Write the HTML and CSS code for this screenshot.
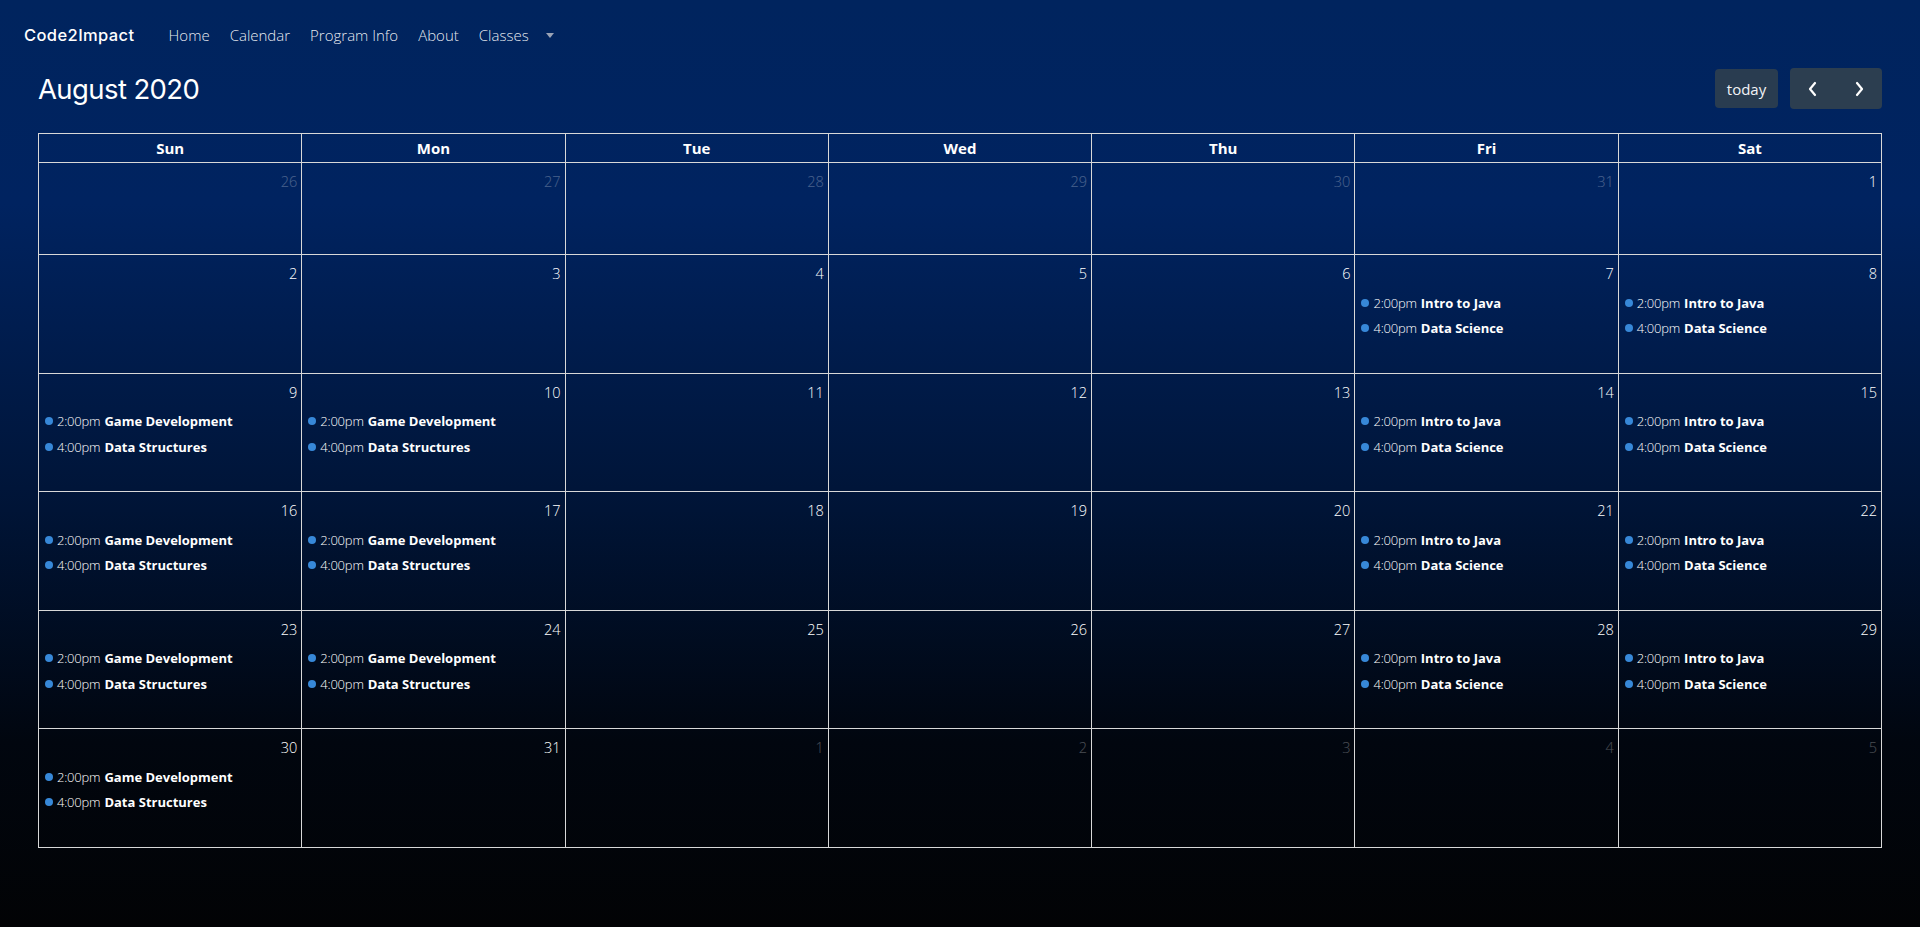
FILE: index.html
```html
<!DOCTYPE html>
<html lang="en">
<head>
    <meta charset="UTF-8">
    <meta name="viewport" content="width=device-width, initial-scale=1.0">
    <title>Calendar - Code2Impact</title>
    <link rel="stylesheet" href="styles.css">
</head>
<body>
    <nav class="navbar">
        <a class="brand" href="#">Code2Impact</a>
        <ul class="nav-links">
            <li><a href="#">Home</a></li>
            <li><a href="#">Calendar</a></li>
            <li><a href="#">Program Info</a></li>
            <li><a href="#">About</a></li>
            <li><a href="#" class="dropdown">Classes <span class="caret"></span></a></li>
        </ul>
    </nav>

    <main class="calendar">
        <div class="toolbar">
            <h2 class="title">August 2020</h2>
            <div class="controls">
                <button class="btn today-btn">today</button>
                <div class="btn-group">
                    <button class="btn icon-btn" aria-label="prev">
                        <svg width="12" height="16" viewBox="0 0 12 16"><polyline points="8,2 3,8 8,14" fill="none" stroke="#fff" stroke-width="2.2" stroke-linecap="round" stroke-linejoin="round"/></svg>
                    </button>
                    <button class="btn icon-btn" aria-label="next">
                        <svg width="12" height="16" viewBox="0 0 12 16"><polyline points="4,2 9,8 4,14" fill="none" stroke="#fff" stroke-width="2.2" stroke-linecap="round" stroke-linejoin="round"/></svg>
                    </button>
                </div>
            </div>
        </div>

        <table class="month">
            <thead>
                <tr>
                    <th>Sun</th><th>Mon</th><th>Tue</th><th>Wed</th><th>Thu</th><th>Fri</th><th>Sat</th>
                </tr>
            </thead>
            <tbody>
                <tr class="week short">
                    <td class="other"><div class="day-num">26</div></td>
                    <td class="other"><div class="day-num">27</div></td>
                    <td class="other"><div class="day-num">28</div></td>
                    <td class="other"><div class="day-num">29</div></td>
                    <td class="other"><div class="day-num">30</div></td>
                    <td class="other"><div class="day-num">31</div></td>
                    <td><div class="day-num">1</div></td>
                </tr>
                <tr class="week">
                    <td><div class="day-num">2</div></td>
                    <td><div class="day-num">3</div></td>
                    <td><div class="day-num">4</div></td>
                    <td><div class="day-num">5</div></td>
                    <td><div class="day-num">6</div></td>
                    <td>
                        <div class="day-num">7</div>
                        <div class="event"><span class="dot"></span><span class="time">2:00pm</span><b>Intro to Java</b></div>
                        <div class="event"><span class="dot"></span><span class="time">4:00pm</span><b>Data Science</b></div>
                    </td>
                    <td>
                        <div class="day-num">8</div>
                        <div class="event"><span class="dot"></span><span class="time">2:00pm</span><b>Intro to Java</b></div>
                        <div class="event"><span class="dot"></span><span class="time">4:00pm</span><b>Data Science</b></div>
                    </td>
                </tr>
                <tr class="week">
                    <td>
                        <div class="day-num">9</div>
                        <div class="event"><span class="dot"></span><span class="time">2:00pm</span><b>Game Development</b></div>
                        <div class="event"><span class="dot"></span><span class="time">4:00pm</span><b>Data Structures</b></div>
                    </td>
                    <td>
                        <div class="day-num">10</div>
                        <div class="event"><span class="dot"></span><span class="time">2:00pm</span><b>Game Development</b></div>
                        <div class="event"><span class="dot"></span><span class="time">4:00pm</span><b>Data Structures</b></div>
                    </td>
                    <td><div class="day-num">11</div></td>
                    <td><div class="day-num">12</div></td>
                    <td><div class="day-num">13</div></td>
                    <td>
                        <div class="day-num">14</div>
                        <div class="event"><span class="dot"></span><span class="time">2:00pm</span><b>Intro to Java</b></div>
                        <div class="event"><span class="dot"></span><span class="time">4:00pm</span><b>Data Science</b></div>
                    </td>
                    <td>
                        <div class="day-num">15</div>
                        <div class="event"><span class="dot"></span><span class="time">2:00pm</span><b>Intro to Java</b></div>
                        <div class="event"><span class="dot"></span><span class="time">4:00pm</span><b>Data Science</b></div>
                    </td>
                </tr>
                <tr class="week">
                    <td>
                        <div class="day-num">16</div>
                        <div class="event"><span class="dot"></span><span class="time">2:00pm</span><b>Game Development</b></div>
                        <div class="event"><span class="dot"></span><span class="time">4:00pm</span><b>Data Structures</b></div>
                    </td>
                    <td>
                        <div class="day-num">17</div>
                        <div class="event"><span class="dot"></span><span class="time">2:00pm</span><b>Game Development</b></div>
                        <div class="event"><span class="dot"></span><span class="time">4:00pm</span><b>Data Structures</b></div>
                    </td>
                    <td><div class="day-num">18</div></td>
                    <td><div class="day-num">19</div></td>
                    <td><div class="day-num">20</div></td>
                    <td>
                        <div class="day-num">21</div>
                        <div class="event"><span class="dot"></span><span class="time">2:00pm</span><b>Intro to Java</b></div>
                        <div class="event"><span class="dot"></span><span class="time">4:00pm</span><b>Data Science</b></div>
                    </td>
                    <td>
                        <div class="day-num">22</div>
                        <div class="event"><span class="dot"></span><span class="time">2:00pm</span><b>Intro to Java</b></div>
                        <div class="event"><span class="dot"></span><span class="time">4:00pm</span><b>Data Science</b></div>
                    </td>
                </tr>
                <tr class="week">
                    <td>
                        <div class="day-num">23</div>
                        <div class="event"><span class="dot"></span><span class="time">2:00pm</span><b>Game Development</b></div>
                        <div class="event"><span class="dot"></span><span class="time">4:00pm</span><b>Data Structures</b></div>
                    </td>
                    <td>
                        <div class="day-num">24</div>
                        <div class="event"><span class="dot"></span><span class="time">2:00pm</span><b>Game Development</b></div>
                        <div class="event"><span class="dot"></span><span class="time">4:00pm</span><b>Data Structures</b></div>
                    </td>
                    <td><div class="day-num">25</div></td>
                    <td><div class="day-num">26</div></td>
                    <td><div class="day-num">27</div></td>
                    <td>
                        <div class="day-num">28</div>
                        <div class="event"><span class="dot"></span><span class="time">2:00pm</span><b>Intro to Java</b></div>
                        <div class="event"><span class="dot"></span><span class="time">4:00pm</span><b>Data Science</b></div>
                    </td>
                    <td>
                        <div class="day-num">29</div>
                        <div class="event"><span class="dot"></span><span class="time">2:00pm</span><b>Intro to Java</b></div>
                        <div class="event"><span class="dot"></span><span class="time">4:00pm</span><b>Data Science</b></div>
                    </td>
                </tr>
                <tr class="week">
                    <td>
                        <div class="day-num">30</div>
                        <div class="event"><span class="dot"></span><span class="time">2:00pm</span><b>Game Development</b></div>
                        <div class="event"><span class="dot"></span><span class="time">4:00pm</span><b>Data Structures</b></div>
                    </td>
                    <td><div class="day-num">31</div></td>
                    <td class="other"><div class="day-num">1</div></td>
                    <td class="other"><div class="day-num">2</div></td>
                    <td class="other"><div class="day-num">3</div></td>
                    <td class="other"><div class="day-num">4</div></td>
                    <td class="other"><div class="day-num">5</div></td>
                </tr>
            </tbody>
        </table>
    </main>
</body>
</html>
```
FILE: styles.css
```css
:root {
    --line-color: #d8d8d8;
    --btn-color: #2c3e50;
    --event-dot: #3788d8;
    --text-color: #ffffff;
}

* {
    box-sizing: border-box;
}

body {
    margin: 0;
    min-height: 100vh;
    font-family: "Open Sans", "Noto Sans", sans-serif;
    color: var(--text-color);
    background: linear-gradient(180deg, #00245e 0%, #002360 22%, #001436 55%, #01060f 80%, #020305 100%);
    background-attachment: fixed;
}

/* navbar */
.navbar {
    display: flex;
    align-items: center;
    height: 70px;
    padding: 0 24px 0 24px;
}

.brand {
    font-family: "Inter", "Lato", sans-serif;
    font-weight: 500;
    font-size: 16.5px;
    color: #fff;
    text-decoration: none;
    letter-spacing: 0.4px;
    margin-right: 34px;
}

.nav-links {
    display: flex;
    list-style: none;
    margin: 0;
    padding: 0;
    gap: 20px;
}

.nav-links a {
    color: rgba(255, 255, 255, 0.92);
    text-decoration: none;
    font-size: 15px;
    font-weight: 300;
}

.caret {
    display: inline-block;
    margin-left: 13px;
    vertical-align: 3px;
    border-top: 5px solid #9aa3b5;
    border-left: 4px solid transparent;
    border-right: 4px solid transparent;
}

/* toolbar */
.calendar {
    padding: 0 38px;
}

.toolbar {
    display: flex;
    justify-content: space-between;
    align-items: center;
    height: 41px;
    margin-top: -2px;
    margin-bottom: 24px;
}

.title {
    margin: 0;
    font-family: "Inter", "Lato", sans-serif;
    font-size: 27.5px;
    font-weight: 400;
    letter-spacing: -0.6px;
}

.controls {
    display: flex;
    align-items: center;
    gap: 12px;
}

.btn {
    background-color: var(--btn-color);
    color: #fff;
    border: none;
    border-radius: 4px;
    font-family: "Open Sans", sans-serif;
    font-size: 15px;
    cursor: pointer;
}

.today-btn {
    height: 39px;
    width: 63px;
    padding: 0;
    opacity: 0.95;
}

.btn-group {
    display: flex;
}

.icon-btn {
    width: 46px;
    height: 41px;
    display: flex;
    align-items: center;
    justify-content: center;
    padding: 0;
}

.btn-group .icon-btn:first-child {
    border-radius: 4px 0 0 4px;
}

.btn-group .icon-btn:last-child {
    border-radius: 0 4px 4px 0;
}

/* month grid */
.month {
    width: 100%;
    border-collapse: collapse;
    table-layout: fixed;
    border: 1px solid var(--line-color);
}

.month th,
.month td {
    border: 1px solid var(--line-color);
}

.month th {
    height: 29px;
    font-size: 15px;
    font-weight: 700;
    padding: 0;
}

.week td {
    height: 118.5px;
    vertical-align: top;
    padding: 0;
}

.week.short td {
    height: 92px;
}

.day-num {
    text-align: right;
    font-size: 14.5px;
    font-weight: 300;
    line-height: 22px;
    padding: 8px 4px 0 0;
    margin-bottom: 5px;
}

.other .day-num {
    opacity: 0.28;
}

.event {
    display: flex;
    align-items: center;
    height: 25.5px;
    padding-left: 6px;
    font-size: 13px;
    white-space: nowrap;
    overflow: hidden;
}

.dot {
    width: 8px;
    height: 8px;
    border-radius: 50%;
    background-color: var(--event-dot);
    margin-right: 4px;
    flex-shrink: 0;
}

.time {
    font-weight: 300;
    margin-right: 4px;
    letter-spacing: -0.2px;
}

.event b {
    font-weight: 700;
}
```
